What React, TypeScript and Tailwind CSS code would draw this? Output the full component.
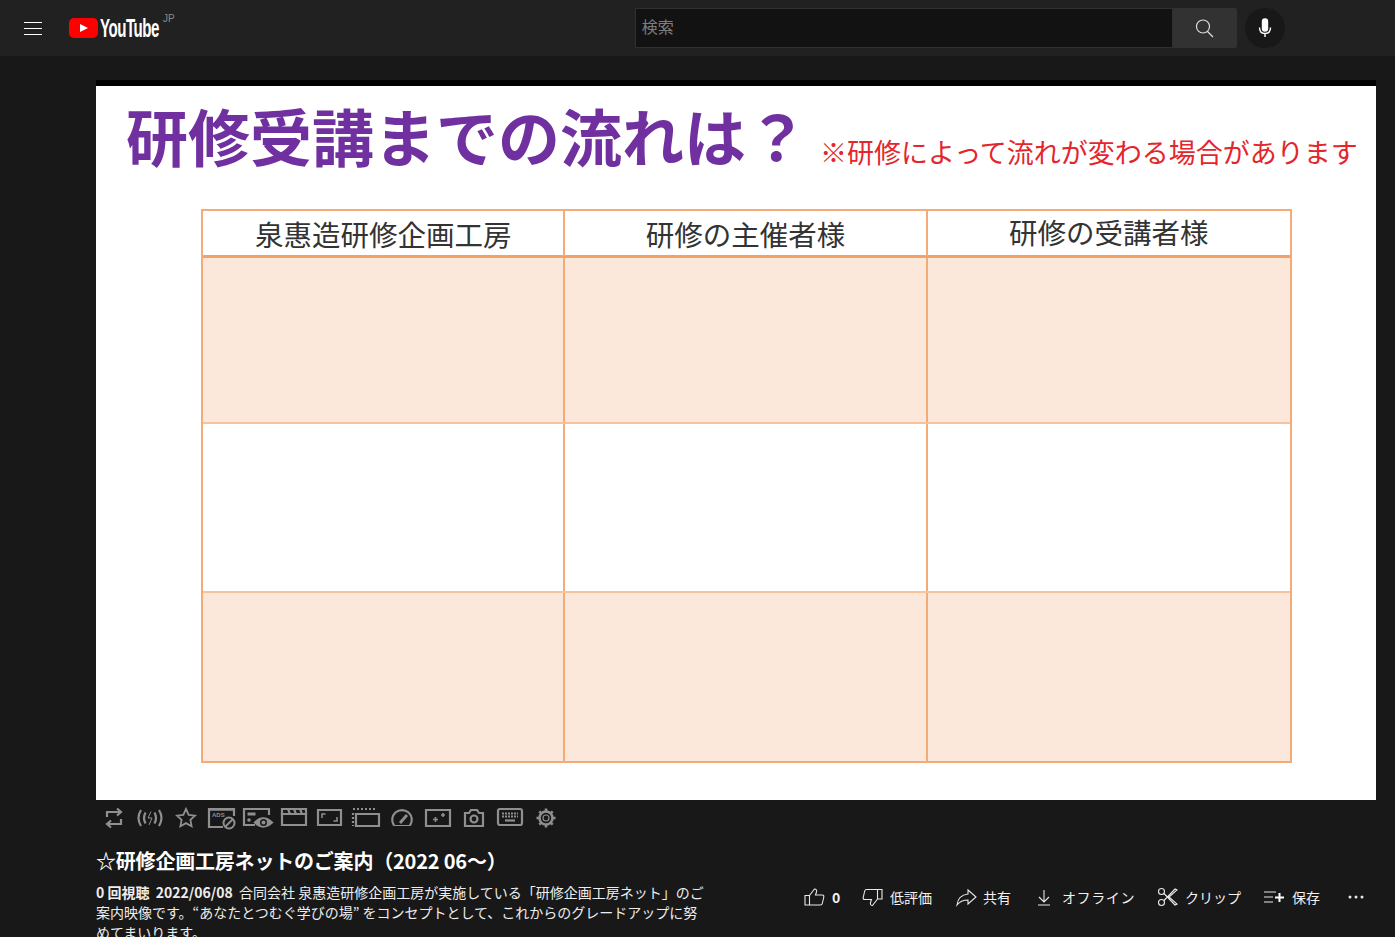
import React from 'react';

const JP = "font-['Noto_Sans_CJK_JP','Noto_Sans',sans-serif]";

const ToolIcon: React.FC<{ children: React.ReactNode }> = ({ children }) => (
  <button className="flex h-[36px] w-[36px] items-center justify-center text-[#8f8f8f]">
    <svg className="overflow-visible" width="28" height="28" viewBox="0 0 28 28" fill="none" stroke="currentColor" strokeWidth="2.200">
      {children}
    </svg>
  </button>
);

const toolIcons = [
  <path key="a" d="M7 13V8h13M17 4.500l4 3.500-4 3.500M21 15v5H8M11 16.500 7 20l4 3.500" />,
  <g key="b">
    <path d="M5 6q-5 8 0 16M9.500 8.500q-3 5.500 0 11M23 6q5 8 0 16M18.500 8.500q3 5.500 0 11" />
    <path d="M15 7.500l-3 6.500h4l-3 7" strokeWidth="1" />
  </g>,
  <path key="c" strokeWidth="1.800" d="M14 5l2.700 5.800 6.300.8-4.600 4.300 1.200 6.300-5.600-3.100-5.600 3.100 1.200-6.300-4.600-4.300 6.300-.8z" />,
  <g key="d">
    <path d="M15 23H1V5h25v7" />
    <path d="M1 6h25" strokeWidth="1.500" />
    <text x="4" y="13" fontSize="6" fontWeight="700" fill="currentColor" stroke="none" fontFamily="Liberation Sans, sans-serif">ADS</text>
    <circle cx="21" cy="19" r="5.500" strokeWidth="2" />
    <path d="M17 23l8-8" strokeWidth="2" />
  </g>,
  <g key="e">
    <path d="M11 21H0V5h25v6" />
    <path d="M3.500 10h8" strokeWidth="3" />
    <circle cx="5" cy="16" r="1.800" fill="currentColor" stroke="none" />
    <path d="M11 18.500q8-8 17 0q-9 8-17 0z" fill="currentColor" />
    <circle cx="19.500" cy="18.500" r="3.500" fill="#181818" stroke="none" />
    <circle cx="19.500" cy="18.500" r="2" fill="currentColor" stroke="none" />
  </g>,
  <g key="f">
    <path d="M2 10h24v11H2z" />
    <path d="M2 5h24v5H2z" />
    <path d="M8 5l2 5M14 5l2 5M20 5l2 5" />
  </g>,
  <g key="g">
    <path d="M2 6h23v15H2z" />
    <path d="M6 14v-4h3.500M21 13v4h-3.500" strokeWidth="1.500" />
  </g>,
  <g key="h">
    <path d="M4 10h23v12H4z" />
    <path d="M1 5h24M1 9v13" strokeDasharray="2 2" />
  </g>,
  <g key="i">
    <path d="M6 21.500a9.800 9.800 0 1 1 16 0" />
    <path d="M6 21.500h16" strokeWidth="1" />
    <path d="M12 19l7-8" strokeWidth="2.800" />
  </g>,
  <g key="j">
    <path d="M2 6h24v16H2z" />
    <path d="M9 15.500h5M11.500 13v5M17 11h4M19 9v4" strokeWidth="1.600" />
  </g>,
  <g key="k">
    <path d="M5 9h4l2-3h6l2 3h4v13H5z" />
    <circle cx="14" cy="15" r="3.500" />
  </g>,
  <g key="l">
    <rect x="2" y="5" width="24" height="16" rx="2" />
    <path d="M6 9.500h16M6 12.500h16" strokeWidth="2" strokeDasharray="2 1" />
    <path d="M9 16.500h10" />
  </g>,
  <g key="m">
    <circle cx="14" cy="14" r="6.500" strokeWidth="2.500" />
    <circle cx="14" cy="14" r="3" strokeWidth="1.200" />
    <path d="M14 4.500v3M14 20.500v3M4.500 14h3M20.500 14h3M7.300 7.300l2 2M18.700 18.700l2 2M20.700 7.300l-2 2M9.300 18.700l-2 2" strokeWidth="2.500" />
  </g>,
];

const ActionIcon: React.FC<{ children: React.ReactNode }> = ({ children }) => (
  <svg width="24" height="24" viewBox="0 0 24 24" fill="none" stroke="#e8e8e8" strokeWidth="1.100">
    {children}
  </svg>
);

const Action: React.FC<{ icon: React.ReactNode; label: string; gap: string; width: string; labelClass?: string }> = ({ icon, label, gap, width, labelClass }) => (
  <div className={`flex items-center ${gap} ${width}`}>
    {icon}
    <span className={`text-[14px] leading-[20px] text-[#f1f1f1] ${labelClass ?? ''}`}>{label}</span>
  </div>
);

const FlowRow: React.FC<{ tinted: boolean; height: string; last?: boolean }> = ({ tinted, height, last }) => (
  <div className={`grid grid-cols-3 ${height} ${last ? '' : 'border-b-2 border-[#f7c39c]'}`}>
    {[0, 1, 2].map((col) => (
      <div key={col} className={`${tinted ? 'bg-[#fbe8da]' : 'bg-white'} ${col < 2 ? 'border-r-2 border-[#f3ab78]' : ''}`} />
    ))}
  </div>
);

export default function App() {
  return (
    <div className={`${JP} h-[937px] w-[1395px] overflow-hidden bg-[#181818]`}>
      <header className="flex h-[56px] items-center bg-[#212121]">
        <button className="ml-[24px] flex h-[13px] w-[18px] flex-col justify-between">
          <span className="h-px w-full bg-white" />
          <span className="h-px w-full bg-white" />
          <span className="h-px w-full bg-white" />
        </button>
        <div className="ml-[27px] flex items-center">
          <svg width="29" height="20" viewBox="0 0 29 20">
            <rect width="29" height="20" rx="5" fill="#ff0000" />
            <path d="M11 6l8 4-8 4z" fill="#fff" />
          </svg>
          <span className="ml-[2px] w-[60px] origin-left scale-x-[0.58] font-['Liberation_Sans',sans-serif] text-[26px] leading-[20px] font-bold tracking-[-0.8px] whitespace-nowrap text-white">
            YouTube
          </span>
          <span className="mb-[19px] ml-[3px] font-['Liberation_Sans',sans-serif] text-[10px] leading-[10px] text-[#8a8a8a]">JP</span>
        </div>
        <div className="ml-[460px] flex h-[40px] w-[602px]">
          <div className="flex h-full w-[538px] items-center border border-[#303030] bg-[#121212] pb-[5px] pl-[6px] text-[16px] text-[#7d7d7d]">
            検索
          </div>
          <button className="flex h-full w-[64px] items-center justify-center rounded-r-[2px] bg-[#323232]">
            <svg className="-translate-x-px" width="24" height="24" viewBox="0 0 24 24" fill="none" stroke="#dcdcdc" strokeWidth="1.200">
              <circle cx="11" cy="10.500" r="6.500" />
              <path d="M15.500 15.500 21 21" />
            </svg>
          </button>
        </div>
        <button className="ml-[8px] flex h-[40px] w-[40px] items-center justify-center rounded-full bg-[#181818]">
          <svg width="24" height="24" viewBox="0 0 24 24" fill="none" stroke="#fff" strokeWidth="1.400">
            <rect x="9.500" y="3" width="5" height="12" rx="2.500" fill="#fff" />
            <path d="M6.500 11.500c0 4 2.500 6 5.500 6s5.500-2 5.500-6M12 17.500V21" />
          </svg>
        </button>
      </header>

      <main className="pl-[96px]">
        <div className="mt-[24px] flex h-[720px] w-[1280px] flex-col bg-white">
          <div className="h-[6px] bg-black" />
          <div className="flex h-[102px] items-end whitespace-nowrap">
            <span className="mb-[8px] ml-[30px] text-[62px] leading-[90px] font-bold text-[#7030a0]">研修受講までの流れは？</span>
            <span className="mb-[12px] ml-[12px] text-[27px] leading-[48px] text-[#e4262c]">※研修によって流れが変わる場合があります</span>
          </div>
          <div className="mt-[21px] ml-[105px] flex w-[1091px] flex-col border-2 border-[#f3ab78]">
            <div className="grid h-[47px] grid-cols-3 border-b-[3px] border-[#f2a268] bg-white text-center text-[28.500px] leading-[45px] text-[#333333]">
              <div className="border-r-2 border-[#f3ab78]">泉惠造研修企画工房</div>
              <div className="border-r-2 border-[#f3ab78]">研修の主催者様</div>
              <div className="-translate-y-[2px]">研修の受講者様</div>
            </div>
            <FlowRow tinted height="h-[166px]" />
            <FlowRow tinted={false} height="h-[169px]" />
            <FlowRow tinted height="h-[168px]" last />
          </div>
        </div>

        <div className="flex h-[36px] items-center">
          {toolIcons.map((icon, idx) => (
            <ToolIcon key={idx}>{icon}</ToolIcon>
          ))}
        </div>

        <h1 className="mt-[9px] text-[20px] leading-[32px] font-bold tracking-[-0.2px] text-white">☆研修企画工房ネットのご案内（2022 06〜）</h1>

        <div className="mt-[5px] flex">
          <p className="w-[610px] text-[14px] leading-[20px] text-[#eeeeee]">
            <span className="font-bold">0 回視聴&nbsp;&nbsp;2022/06/08</span>&nbsp;&nbsp;合同会社 泉惠造研修企画工房が実施している「研修企画工房ネット」のご
            <br />
            案内映像です。“あなたとつむぐ学びの場” をコンセプトとして、これからのグレードアップに努
            <br />
            めてまいります。
          </p>
          <div className="ml-[97px] flex h-[30px] items-center">
            <Action
              gap="gap-[6px]"
              width="w-[57px]"
              label=""
              icon={
                <div className="flex items-center gap-[5px]">
                  <ActionIcon>
                    <path d="M2 10.500h4.500V20H2zM6.500 10.500 11.500 4c1.500 0 2.500 1 2 3l-1 3h7c1 0 1.500 1 1.300 2l-1.500 6.500c-.2 1-1 1.500-2 1.500H6.500" />
                  </ActionIcon>
                  <span className="text-[14px] font-bold text-[#f1f1f1]">0</span>
                </div>
              }
            />
            <Action
              gap="gap-[6px]"
              width="w-[94px]"
              label="低評価"
              icon={
                <ActionIcon>
                  <path d="M22 14h-4.500V4.500H22zM17.500 14l-5 6.500c-1.500 0-2.500-1-2-3l1-3h-7c-1 0-1.500-1-1.300-2l1.500-6.500c.2-1 1-1.500 2-1.500h11" />
                </ActionIcon>
              }
            />
            <Action
              gap="gap-[5px]"
              width="w-[78px]"
              label="共有"
              icon={
                <ActionIcon>
                  <path d="M14 5l8 7-8 7v-4c-5 0-8 1-11 5 .5-5 3-10 11-11z" />
                </ActionIcon>
              }
            />
            <Action
              gap="gap-[6px]"
              width="w-[123px]"
              label="オフライン"
              labelClass="tracking-[0.6px]"
              icon={
                <ActionIcon>
                  <path d="M12 5v11M7 12l5 5 5-5M6 20h12" />
                </ActionIcon>
              }
            />
            <Action
              gap="gap-[6px]"
              width="w-[107px]"
              label="クリップ"
              icon={
                <ActionIcon>
                  <circle cx="6.500" cy="6.500" r="3" />
                  <circle cx="6.500" cy="17.500" r="3" />
                  <path d="M9 8.500 20 20l2-1-8-7 8-7-2-1L9 15.500" />
                </ActionIcon>
              }
            />
            <Action
              gap="gap-[6px]"
              width="w-[82px]"
              label="保存"
              icon={
                <ActionIcon>
                  <path d="M2 7h12M2 12h9M2 17h9" />
                  <path d="M17.500 8v9M13 12.500h9" strokeWidth="2" stroke="#fff" />
                </ActionIcon>
              }
            />
            <svg width="24" height="24" viewBox="0 0 24 24" fill="#e8e8e8">
              <circle cx="6" cy="12" r="1.500" />
              <circle cx="12" cy="12" r="1.500" />
              <circle cx="18" cy="12" r="1.500" />
            </svg>
          </div>
        </div>
      </main>
    </div>
  );
}
